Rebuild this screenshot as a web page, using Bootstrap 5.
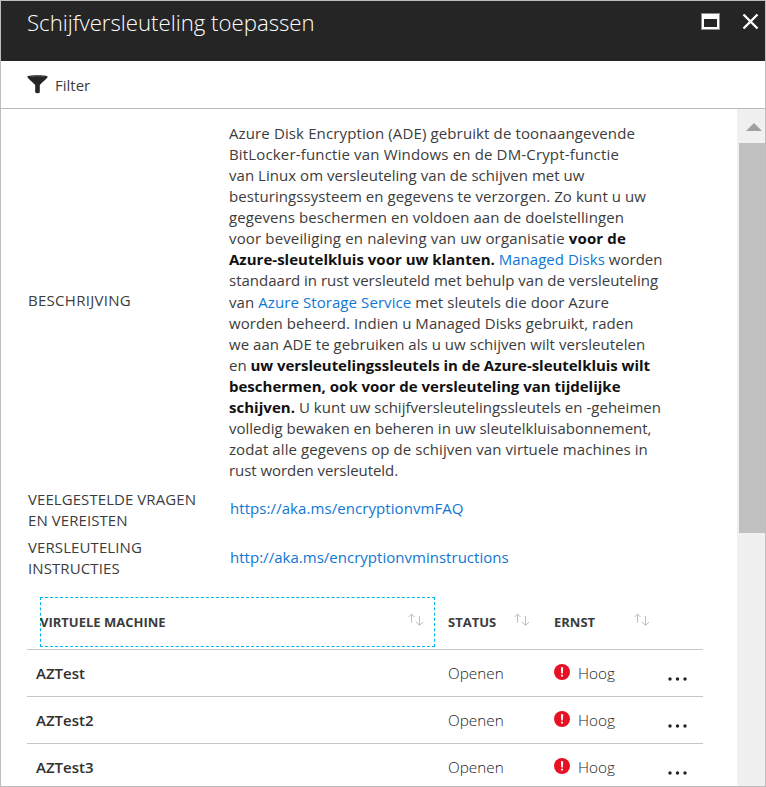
<!DOCTYPE html>
<html lang="nl">
<head>
<meta charset="utf-8">
<meta name="viewport" content="width=device-width, initial-scale=1">
<title>Schijfversleuteling toepassen</title>
<link href="https://cdn.jsdelivr.net/npm/bootstrap@5.3.0/dist/css/bootstrap.min.css" rel="stylesheet">
<style>
body{font-family:"Open Sans","Noto Sans",sans-serif;font-size:15px;line-height:21.06px;color:#3c3c3c;background:#fff}
.blade{height:787px;border:1px solid #bdbdbd}
.blade-head{height:60px;background:#252525;padding:5px 6px 0 26px}
.blade-title{font-size:22.2px;line-height:34px;font-weight:300;margin:0}
.blade-head button,.more{background:none;border:0;padding:0;display:block;line-height:0}
.win-icons{gap:22px;padding-top:7px}
.toolbar{height:48px;border-bottom:1px solid #b9b9b9;padding:0 0 0 26px;gap:7px}
.toolbar span{padding-top:2px}
.scroller{width:28px;background:#f0f0f0;padding-left:2px}
.arrow-up{height:34px;padding:14px 0 0 7px;line-height:0}
.thumb{height:390px;background:#c0c0c0}
.facts{padding:14px 0 0 27px}
.fact-label{width:201px}
.label-wide{letter-spacing:.28px;padding-bottom:4px}
.fact a,.fact a:hover{color:#0f77d4;text-decoration:none}
.fact-links{height:49px;padding-top:8px;letter-spacing:.07px}
.fact-links .fact-label{width:202px}
.fact-links a{padding-bottom:2px}
.fact-last{height:49px;padding-top:7px;letter-spacing:.02px}
.fact-last .fact-label{letter-spacing:.1px}
.fact-last a{padding-bottom:1px}
.desc b{color:#111}
.desc span{display:block;white-space:nowrap}
.desc span:nth-child(1){letter-spacing:.125px}
.desc span:nth-child(2){letter-spacing:.16px}
.desc span:nth-child(3){letter-spacing:.039px}
.desc span:nth-child(4){letter-spacing:.076px}
.desc span:nth-child(5){letter-spacing:.08px}
.desc span:nth-child(6){letter-spacing:.15px}
.desc span:nth-child(7){letter-spacing:.02px}
.desc span:nth-child(9){letter-spacing:.081px}
.desc span:nth-child(10),.desc span:nth-child(11){letter-spacing:.045px}
.desc span:nth-child(12){letter-spacing:-.034px}
.desc span:nth-child(14){letter-spacing:.028px}
.desc span:nth-child(16){letter-spacing:.09px}
.desc span:nth-child(17){letter-spacing:-.06px}
.vm-table{width:676px;margin:11px 0 0 26px;table-layout:fixed;color:#3c3c3c;--bs-table-color:#3c3c3c}
.vm-table>:not(caption)>*>*{padding:0;border-bottom:1px solid #c6c6c6;vertical-align:middle;height:47px}
.vm-table>thead>tr>th{height:59px;font-size:13px;font-weight:700;vertical-align:top;padding-top:7px}
.vm-table>tbody>tr>td{font-weight:300;color:#1c1c1c;font-size:15.3px;padding-top:2px}
.vm-table>tbody>tr>td:first-child{font-weight:600;padding-left:9px;font-size:15px;color:#303030}
.head-cell{height:50px}
.focus-cell{width:395px;margin-left:13px;border:1px dashed #00b4f0;padding-right:10px;text-indent:-1px}
.sort-far{margin-right:18px}
.sev{gap:8px}
.sev svg{margin-bottom:4px}
.more{padding-top:10px}
</style>
</head>
<body class="overflow-hidden">
<div class="blade d-flex flex-column overflow-hidden">
  <header class="blade-head d-flex justify-content-between text-white flex-shrink-0">
    <h1 class="blade-title">Schijfversleuteling toepassen</h1>
    <div class="win-icons d-flex align-items-start">
      <button type="button" aria-label="Maximaliseren"><svg width="19" height="17" viewBox="0 0 19 17"><path d="M0 0h19v17H0z" fill="#8c8c8c"/><path d="M1 1h17v15H1z" fill="#fff"/><path d="M3 6h13v8H3z" fill="#252525"/></svg></button>
      <button type="button" aria-label="Sluiten"><svg width="17" height="17" viewBox="0 0 17 17"><path d="M1.5 1.5l14 14m0-14l-14 14" stroke="#fff" stroke-width="2.4"/></svg></button>
    </div>
  </header>
  <div class="toolbar d-flex align-items-center flex-shrink-0">
    <svg width="21" height="19" viewBox="0 0 21 19"><path d="M.3 1.7C1.5-.1 19.5-.1 20.700 1.700C20.700 3 13.200 9 12.800 10V17.500Q10.300 18.800 8.200 17.500V10C7.800 9 .3 3 .3 1.700z" fill="#252525"/><path d="M3 1.700Q10.500.6 18 1.700" fill="none" stroke="#555" stroke-width=".7"/></svg>
    <span>Filter</span>
  </div>
  <div class="d-flex flex-grow-1 overflow-hidden">
    <main class="flex-grow-1">
      <div class="facts">
        <div class="fact d-flex align-items-center">
          <div class="fact-label label-wide flex-shrink-0">BESCHRIJVING</div>
          <div class="desc">
            <span>Azure Disk Encryption (ADE) gebruikt de toonaangevende</span>
            <span>BitLocker-functie van Windows en de DM-Crypt-functie</span>
            <span>van Linux om versleuteling van de schijven met uw</span>
            <span>besturingssysteem en gegevens te verzorgen. Zo kunt u uw</span>
            <span>gegevens beschermen en voldoen aan de doelstellingen</span>
            <span>voor beveiliging en naleving van uw organisatie <b>voor de</b></span>
            <span><b>Azure-sleutelkluis voor uw klanten.</b> <a href="#">Managed Disks</a> worden</span>
            <span>standaard in rust versleuteld met behulp van de versleuteling</span>
            <span>van <a href="#">Azure Storage Service</a> met sleutels die door Azure</span>
            <span>worden beheerd. Indien u Managed Disks gebruikt, raden</span>
            <span>we aan ADE te gebruiken als u uw schijven wilt versleutelen</span>
            <span>en <b>uw versleutelingssleutels in de Azure-sleutelkluis wilt</b></span>
            <span><b>beschermen, ook voor de versleuteling van tijdelijke</b></span>
            <span><b>schijven.</b> U kunt uw schijfversleutelingssleutels en -geheimen</span>
            <span>volledig bewaken en beheren in uw sleutelkluisabonnement,</span>
            <span>zodat alle gegevens op de schijven van virtuele machines in</span>
            <span>rust worden versleuteld.</span>
          </div>
        </div>
        <div class="fact fact-links d-flex align-items-center">
          <div class="fact-label flex-shrink-0">VEELGESTELDE VRAGEN<br>EN VEREISTEN</div>
          <a href="#">https://aka.ms/encryptionvmFAQ</a>
        </div>
        <div class="fact fact-links fact-last d-flex align-items-center">
          <div class="fact-label flex-shrink-0">VERSLEUTELING<br>INSTRUCTIES</div>
          <a href="#">http://aka.ms/encryptionvminstructions</a>
        </div>
      </div>
      <svg class="d-none"><defs>
        <g id="sort" fill="none" stroke="#bdbdbd" stroke-width="1"><path d="M3.500 9.500V1M.5 4L3.500 1l3 3M11.500 3v9M8 9l3.500 3.300L15 9"/></g>
        <g id="alert"><circle cx="8" cy="8" r="8" fill="#e81123"/><path d="M6.900 3.300h2.300l-.35 6.200h-1.600zM7.100 10.700h1.900v1.900H7.100z" fill="#fff"/></g>
        <g id="dots" fill="#222"><circle cx="2" cy="2" r="1.700"/><circle cx="9.500" cy="2" r="1.700"/><circle cx="17" cy="2" r="1.700"/></g>
      </defs></svg>
      <table class="table vm-table">
        <colgroup><col style="width:421px"><col style="width:106px"><col style="width:114px"><col></colgroup>
        <thead>
          <tr>
            <th><div class="head-cell focus-cell d-flex justify-content-between align-items-center">VIRTUELE MACHINE<svg width="16" height="14" class="mb-1"><use href="#sort"/></svg></div></th>
            <th><div class="head-cell d-flex justify-content-between align-items-center pe-4">STATUS<svg width="16" height="14" class="mb-1"><use href="#sort"/></svg></div></th>
            <th><div class="head-cell d-flex justify-content-between align-items-center">ERNST<svg width="16" height="14" class="mb-1 sort-far"><use href="#sort"/></svg></div></th>
            <th></th>
          </tr>
        </thead>
        <tbody>
          <tr><td>AZTest</td><td>Openen</td><td><div class="sev d-flex align-items-center"><svg width="16" height="16"><use href="#alert"/></svg>Hoog</div></td><td><button type="button" class="more" aria-label="Meer"><svg width="20" height="4"><use href="#dots"/></svg></button></td></tr>
          <tr><td>AZTest2</td><td>Openen</td><td><div class="sev d-flex align-items-center"><svg width="16" height="16"><use href="#alert"/></svg>Hoog</div></td><td><button type="button" class="more" aria-label="Meer"><svg width="20" height="4"><use href="#dots"/></svg></button></td></tr>
          <tr><td>AZTest3</td><td>Openen</td><td><div class="sev d-flex align-items-center"><svg width="16" height="16"><use href="#alert"/></svg>Hoog</div></td><td><button type="button" class="more" aria-label="Meer"><svg width="20" height="4"><use href="#dots"/></svg></button></td></tr>
        </tbody>
      </table>
    </main>
    <div class="scroller flex-shrink-0">
      <div class="arrow-up"><svg width="16" height="8"><path d="M0 8L8 0l8 8z" fill="#a0a0a0"/></svg></div>
      <div class="thumb"></div>
    </div>
  </div>
</div>
<script src="https://cdn.jsdelivr.net/npm/bootstrap@5.3.0/dist/js/bootstrap.bundle.min.js"></script>
</body>
</html>
